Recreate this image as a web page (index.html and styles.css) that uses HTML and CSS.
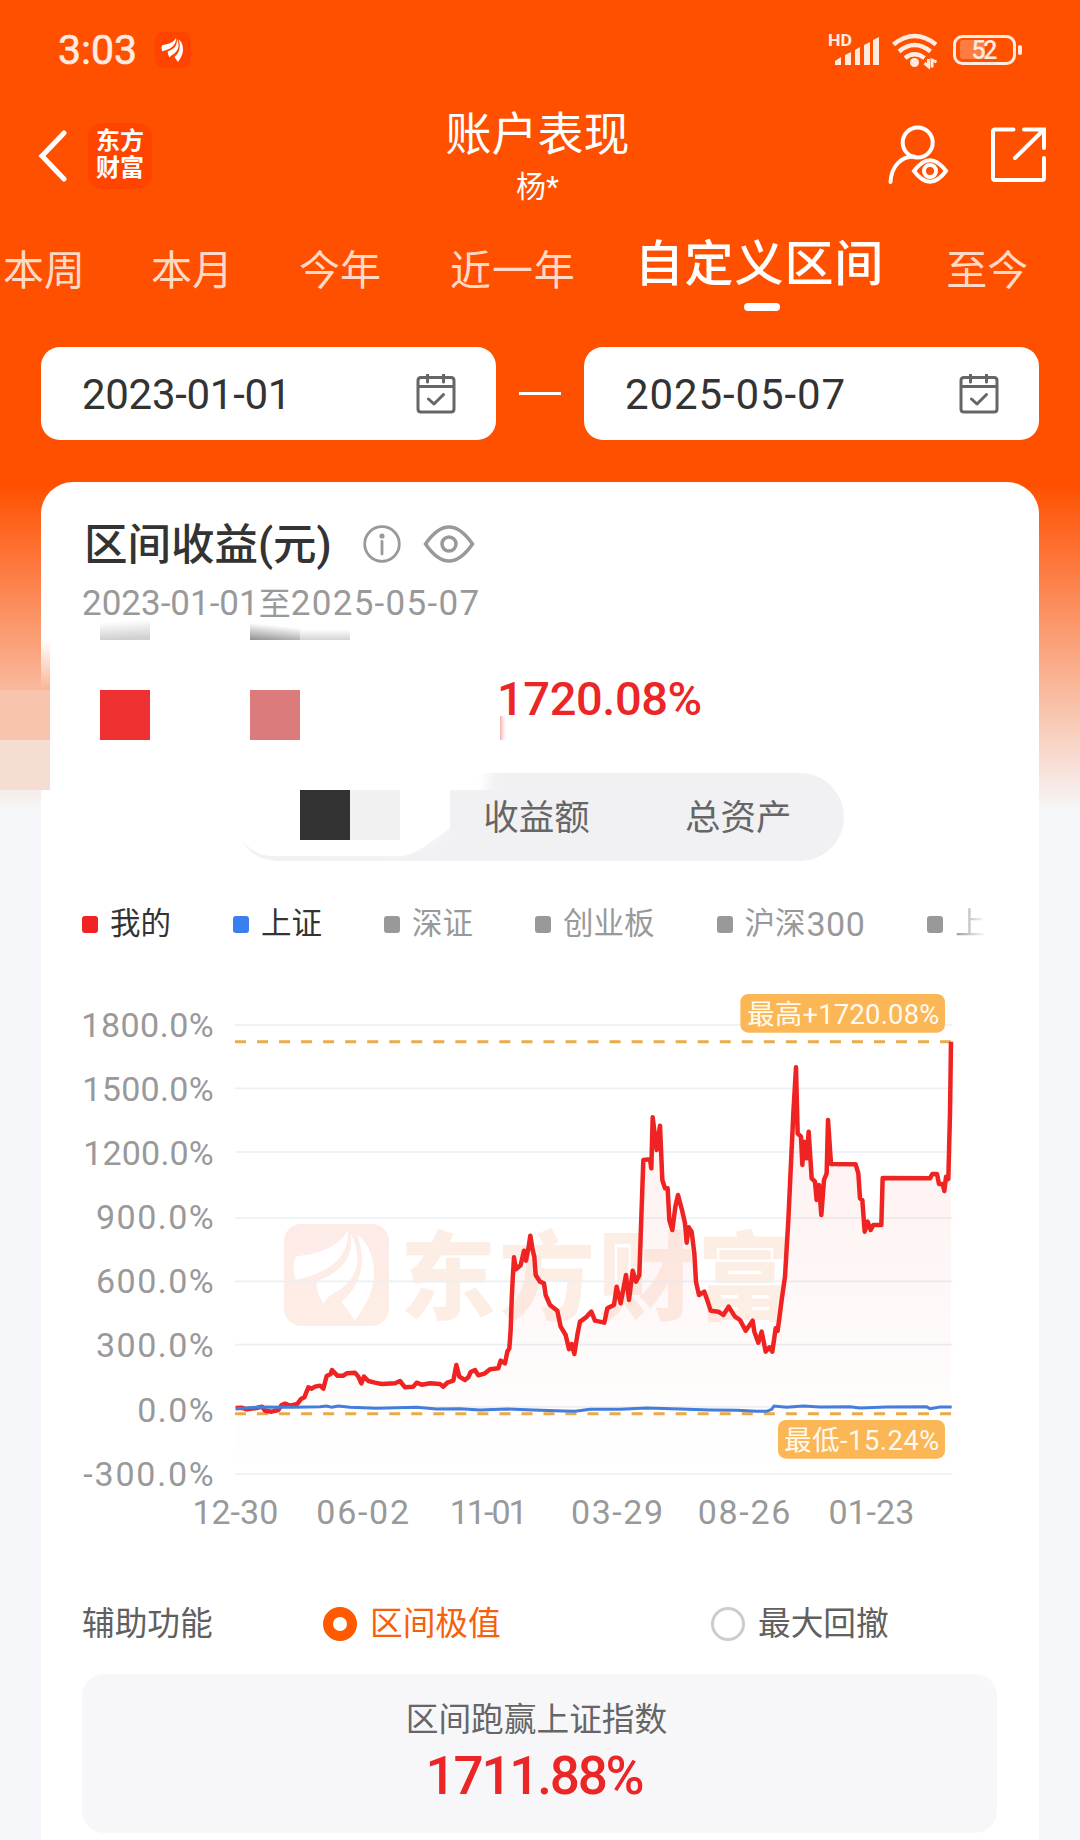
FILE: index.html
```html
<!DOCTYPE html>
<html lang="zh-CN">
  <head>
    <meta charset="utf-8" />
    <title>账户表现</title>
    <link rel="stylesheet" href="styles.css">
  </head>
  <body>
    <svg class="defs">
      <symbol id="leaf" viewBox="0 0 315 308">
        <path d="M190 22C155 80 80 93 38 97Q20 120 36 167C120 150 195 110 192 22Z" />
        <path d="M200 26C212 110 165 145 98 172Q95 200 118 239Q128 218 165 198C225 160 235 95 200 26Z" />
        <path d="M219 32C255 55 275 110 269 165C264 220 235 255 213 290Q195 262 173 234C190 215 218 195 229 145Q242 95 219 32Z" />
      </symbol>
      <symbol id="calendar" viewBox="0 0 40 40">
        <path d="M5 3.5H35Q38 3.5 38 6.500V35Q38 38 35 38H5Q2 38 2 35V6.500Q2 3.500 5 3.500ZM2 12.500H38M11.500 0V8M27.500 0V8M12.500 25L18 30L27.500 20.500" />
      </symbol>
    </svg>

    <div class="page">
      <div class="status-bar">
        <span class="time">3:03</span>
        <span class="mini-logo"><svg viewBox="0 0 315 308"><use href="#leaf" /></svg></span>
        <svg class="signals" width="200" height="40" viewBox="825 30 200 40">
          <text class="hd" x="828" y="46" textLength="24" lengthAdjust="spacingAndGlyphs">HD</text>
          <path class="solid" d="M835 65V61L841 57V65ZM845 65V55L851 52V65ZM855 65V50L860 47V65ZM864 65V45L870 42V65ZM873 65V40L879 37V65Z" />
          <path class="wave" d="M893.500 44.500Q914.500 27.500 936 44.500M899 51.500Q914.500 38.500 930.500 51.500M905 58Q914.500 50.500 924.500 58" />
          <circle class="solid" cx="914.500" cy="62.500" r="4.500" />
          <path class="updown" d="M924.500 63L928.500 66.500V59M936.500 62L932 60V67.500" />
          <rect class="battery" x="954.500" y="36.500" width="60" height="27" rx="8" />
          <rect class="charge" x="960" y="40" width="25" height="19" rx="3" />
          <rect class="solid" x="1018" y="45" width="4" height="10" rx="2" />
          <text class="level" x="971.500" y="59" textLength="26">52</text>
        </svg>
      </div>

      <div class="nav">
        <div class="nav-left">
          <svg width="32" height="52" viewBox="0 0 32 52"><path class="chevron" d="M27 3L5 26L27 49" /></svg>
          <div class="brand">东方<br>财富</div>
        </div>
        <div class="nav-title">
          <h1>账户表现</h1>
          <span>杨*</span>
        </div>
        <div class="nav-right">
          <svg class="line-icon" width="62" height="60" viewBox="887 125 62 60">
            <circle cx="917.700" cy="142.500" r="15" />
            <path d="M890.500 182C891.500 166 901 156.500 914 156.500M914 171Q930 149.500 946 171Q930 192.500 914 171Z" />
            <circle cx="930" cy="171" r="6" />
          </svg>
          <svg class="line-icon" width="58" height="58" viewBox="990 126 58 58">
            <path d="M1013.500 129.500H995Q993 129.500 993 131.500V178Q993 180 995 180H1042Q1044 180 1044 178V158M1024 129.500H1044V148M1043 130.500L1015 158" />
          </svg>
        </div>
      </div>

      <div class="tabs">
        <span>本周</span>
        <span>本月</span>
        <span>今年</span>
        <span class="tab-year">近一年</span>
        <span class="active">自定义区间</span>
        <span>至今</span>
      </div>

      <div class="dates">
        <div class="date-box">
          <span class="d1">2023-01-01</span>
          <svg class="calendar" width="40" height="40"><use href="#calendar" /></svg>
        </div>
        <i class="dash"></i>
        <div class="date-box">
          <span class="d2">2025-05-07</span>
          <svg class="calendar" width="40" height="40"><use href="#calendar" /></svg>
        </div>
      </div>

      <div class="card">
        <div class="card-title">
          <h2>区间收益(元)</h2>
          <svg class="grey-icon" width="40" height="40" viewBox="0 0 40 40">
            <circle cx="20" cy="20" r="17.300" />
            <path d="M20 17.500V30" /><circle class="dot" cx="20" cy="12" r="1.200" />
          </svg>
          <svg class="grey-icon eye" width="52" height="40" viewBox="0 0 52 40">
            <path d="M2.500 20Q26 -14 49.500 20Q26 54 2.500 20Z" />
            <circle cx="26" cy="20" r="7" />
          </svg>
        </div>
        <div class="range"><span class="from">2023-01-01</span>至<span>2025-05-07</span></div>
        <div class="rate">1720.08%</div>

        <div class="switch">
          <span class="chosen"></span>
          <span>收益额</span>
          <span>总资产</span>
        </div>

        <div class="legend">
          <span class="item mine"><i></i>我的</span>
          <span class="item sh"><i></i>上证</span>
          <span class="item"><i></i>深证</span>
          <span class="item"><i></i>创业板</span>
          <span class="item"><i></i>沪深<b>300</b></span>
          <span class="item"><i></i><em>上</em></span>
        </div>

        <!-- three units per pixel -->
        <svg class="chart" width="900" height="560" viewBox="0 0 2700 1680">
          <defs>
            <linearGradient id="fade" gradientUnits="userSpaceOnUse" x1="0" y1="185" x2="0" y2="1482">
              <stop offset="0" stop-color="#f02020" stop-opacity=".08" />
              <stop offset="0.6" stop-color="#f02020" stop-opacity=".032" />
              <stop offset="1" stop-color="#f02020" stop-opacity="0" />
            </linearGradient>
            <linearGradient id="mark" x1="0" y1="0" x2="0" y2="1">
              <stop offset="0" stop-color="#fdebe8" />
              <stop offset="1" stop-color="#fdeee5" />
            </linearGradient>
          </defs>

          <rect x="672" y="732" width="315" height="306" rx="52" fill="url(#mark)" />
          <use class="leaf" href="#leaf" x="672" y="732" width="315" height="308" />
          <text class="watermark" x="1020" y="996" textLength="1180">东方财富</text>

          <path class="grid" d="M525 135H2678M525 325H2678M525 516H2678M525 714H2678M525 904H2678M525 1094H2678M525 1281H2678M525 1482H2678" />

          <g class="y-axis">
            <text x="64" y="171" textLength="397">1800.0%</text>
            <text x="67" y="363" textLength="394">1500.0%</text>
            <text x="70" y="555" textLength="391">1200.0%</text>
            <text x="108" y="748" textLength="353">900.0%</text>
            <text x="108" y="940" textLength="353">600.0%</text>
            <text x="108" y="1132" textLength="353">300.0%</text>
            <text x="232" y="1325" textLength="229">0.0%</text>
            <text x="70" y="1517" textLength="391">-300.0%</text>
          </g>
          <g class="x-axis">
            <text x="526" y="1631">12-30</text>
            <text x="908" y="1631" textLength="278">06-02</text>
            <text x="1286" y="1631" textLength="234">11-01</text>
            <text x="1671" y="1631" textLength="276">03-29</text>
            <text x="2052" y="1631" textLength="278">08-26</text>
            <text x="2434" y="1631">01-23</text>
          </g>

          <path class="limit" d="M525 185H2675M525 1301H2675" />
          <path id="area" fill="url(#fade)" />
          <polyline id="mine" class="mine-line" points="527,1284 545,1283 560,1288 590,1284 606,1280 615,1292 635,1295 655,1290 665,1275 675,1271 690,1277 712,1272 722,1258 733,1252 745,1222 755,1226 765,1220 780,1217 790,1226 800,1188 812,1182 816,1170 832,1187 850,1187 860,1180 885,1178 895,1190 904,1210 912,1190 925,1203 945,1208 965,1212 1005,1210 1020,1203 1035,1222 1060,1220 1070,1208 1085,1214 1110,1210 1140,1212 1150,1220 1162,1208 1180,1202 1189,1155 1198,1190 1215,1200 1225,1192 1232,1176 1245,1170 1255,1186 1275,1180 1290,1168 1315,1165 1322,1142 1335,1150 1342,1115 1348,1105 1352,1050 1355,960 1358,900 1362,832 1368,868 1382,855 1392,812 1398,842 1406,800 1411,767 1418,810 1423,830 1427,885 1440,905 1452,910 1457,945 1470,975 1492,992 1502,1040 1517,1065 1527,1108 1535,1092 1543,1122 1552,1065 1560,1025 1578,1012 1594,995 1605,1022 1633,1028 1642,985 1662,975 1670,920 1682,970 1698,885 1707,960 1718,872 1728,905 1738,885 1750,540 1770,538 1774,565 1778,412 1790,510 1800,437 1807,600 1815,625 1823,625 1828,720 1837,750 1846,680 1854,645 1866,690 1875,730 1880,788 1886,742 1895,755 1903,820 1908,905 1917,945 1933,935 1945,970 1952,992 1975,995 1990,1005 2006,980 2025,1010 2040,1020 2057,1052 2078,1022 2083,1055 2095,1088 2105,1055 2117,1115 2128,1102 2137,1115 2147,1045 2153,1052 2165,960 2175,890 2185,720 2200,400 2208,262 2213,460 2223,470 2227,555 2232,485 2240,535 2246,455 2255,595 2265,605 2270,660 2277,615 2284,705 2292,600 2300,580 2304,420 2313,552 2387,553 2395,580 2400,655 2407,660 2414,755 2423,725 2432,750 2440,735 2464,735 2468,594 2610,595 2617,582 2631,582 2637,612 2648,612 2653,633 2658,590 2665,597 2670,400 2673,185" />
          <polyline class="sh-line" points="527,1286 600,1281 700,1282 780,1280 800,1278 815,1282 835,1278 870,1282 950,1285 1070,1282 1130,1287 1200,1286 1260,1290 1340,1287 1420,1290 1510,1293 1545,1294 1590,1288 1680,1288 1760,1284 1860,1287 1950,1290 2030,1291 2090,1294 2120,1294 2135,1288 2142,1278 2180,1282 2230,1278 2280,1281 2370,1280 2400,1284 2480,1281 2600,1280 2610,1286 2640,1281 2675,1281" />

          <rect class="tag" x="2041" y="42" width="614" height="116" rx="24" />
          <text class="tag-text" x="2062" y="131" textLength="576">最高+1720.08%</text>
          <rect class="tag" x="2154" y="1320" width="501" height="116" rx="24" />
          <text class="tag-text" x="2173" y="1409" textLength="465">最低-15.24%</text>
        </svg>

        <div class="options">
          <span class="label">辅助功能</span>
          <span class="option on"><i></i>区间极值</span>
          <span class="option"><i></i>最大回撤</span>
        </div>

        <div class="summary">
          <span>区间跑赢上证指数</span>
          <strong>1711.88%</strong>
        </div>
      </div>

      <!-- blurred-out account figures -->
      <svg class="mosaic" width="520" height="280" viewBox="0 600 520 280">
        <defs>
          <filter id="soft" x="-20%" y="-20%" width="140%" height="140%"><feGaussianBlur stdDeviation="6" /></filter>
          <linearGradient id="g1" x1="0" y1="0" x2="0.15" y2="1"><stop offset="0.1" stop-color="#fff" /><stop offset="1" stop-color="#d0d0d0" /></linearGradient>
          <linearGradient id="g2" x1="0.25" y1="0.1" x2="0" y2="1"><stop offset="0.1" stop-color="#fff" /><stop offset="1" stop-color="#909090" /></linearGradient>
          <linearGradient id="g3" x1="0" y1="0" x2="0" y2="1"><stop offset="0.1" stop-color="#fff" /><stop offset="1" stop-color="#d4d4d4" /></linearGradient>
          <linearGradient id="g4" x1="0" y1="0" x2="0" y2="1"><stop offset="0" stop-color="#fcb394" stop-opacity="0" /><stop offset="1" stop-color="#fcb394" /></linearGradient>
          <linearGradient id="g5" x1="0" y1="0" x2="1" y2="0"><stop offset="0" stop-color="#f5b0b0" /><stop offset="1" stop-color="#fff" stop-opacity="0" /></linearGradient>
        </defs>
        <path class="white" filter="url(#soft)" d="M220 760H488V790L462 815L440 832L425 842L400 852L260 846L225 842Z" />
        <path class="white" d="M230 790H450V828L425 846Q412 856 398 856H272Q256 856 244 842L230 840Z" />
        <rect x="41" y="640" width="9" height="50" fill="url(#g4)" />
        <rect x="100" y="620" width="50" height="20" fill="url(#g1)" />
        <rect x="250" y="620" width="50" height="20" fill="url(#g2)" />
        <rect x="300" y="628" width="50" height="12" fill="url(#g3)" />
        <rect x="0" y="690" width="50" height="50" fill="#f9c4ad" />
        <rect x="0" y="740" width="50" height="50" fill="#f6ddd1" />
        <rect x="100" y="690" width="50" height="50" fill="#ee3033" />
        <rect x="250" y="690" width="50" height="50" fill="#db7b7c" />
        <rect x="500" y="716" width="8" height="24" fill="url(#g5)" />
        <rect x="300" y="790" width="50" height="50" fill="#323232" />
        <rect x="350" y="790" width="50" height="50" fill="#f1f1f1" />
        <rect x="450" y="790" width="50" height="50" fill="#f1f1f4" />
      </svg>
    </div>

    <script>
      const line = document.getElementById("mine").getAttribute("points");
      document.getElementById("area").setAttribute("d", `M${line} L2673,1482 L527,1482 Z`);
    </script>
  </body>
</html>
```
FILE: styles.css
```css
* {
  box-sizing: border-box;
}
body {
  margin: 0;
  background-color: #f6f7fa;
  font-family: Roboto, "Noto Sans CJK SC", sans-serif;
  color: #333;
}
.defs {
  display: none;
}
.page {
  position: relative;
  width: 1080px;
  height: 1840px;
  overflow: hidden;
  background: linear-gradient(#ff5000 485px, #f6f7fa 812px);
}
h1,
h2 {
  margin: 0;
}

/* status bar */
.status-bar {
  display: flex;
  align-items: center;
  height: 100px;
  padding: 0 55px 0 58px;
}
.time {
  width: 97px;
  font-size: 41px;
  color: #ffebe0;
  -webkit-text-stroke: 0.6px #ffebe0;
}
.mini-logo {
  display: flex;
  justify-content: center;
  align-items: center;
  width: 36px;
  height: 36px;
  border-radius: 8px;
  background-color: #ff4400;
}
.mini-logo svg {
  width: 28px;
  height: 28px;
  fill: white;
}
.signals {
  margin-left: auto;
}
.signals text,
.solid {
  fill: #ffebe0;
}
.hd {
  font-size: 17px;
  font-weight: 700;
}
.level {
  font-size: 25px;
  font-weight: 500;
}
.wave,
.updown,
.battery {
  fill: none;
  stroke: #ffebe0;
  stroke-width: 4.5;
}
.updown,
.battery {
  stroke-width: 3;
}
.charge {
  fill: rgba(255, 255, 255, 0.25);
}

/* navigation */
.nav {
  display: grid;
  grid-template-columns: 1fr auto 1fr;
  height: 110px;
  padding: 0 32px 0 37px;
  color: white;
}
.nav-left {
  display: flex;
  align-items: center;
  gap: 19px;
  padding-bottom: 4px;
}
.chevron {
  fill: none;
  stroke: white;
  stroke-width: 5;
  stroke-linecap: round;
}
.brand {
  width: 64px;
  height: 66px;
  padding-top: 5px;
  border-radius: 14px;
  background-color: #ff4400;
  text-align: center;
  font-size: 24px;
  font-weight: 700;
  line-height: 27px;
}
.nav-title {
  display: flex;
  flex-direction: column;
  align-items: center;
  margin: 0 5px 0 -5px;
}
.nav-title h1 {
  padding-top: 9px;
  font-size: 46px;
  font-weight: 400;
  line-height: 50px;
}
.nav-title span {
  font-size: 30px;
  line-height: 56px;
}
.nav-right {
  display: flex;
  justify-content: flex-end;
  align-items: center;
  gap: 41px;
  padding-bottom: 5px;
}
.line-icon {
  fill: none;
  stroke: white;
  stroke-width: 4;
  stroke-linecap: round;
}

/* period tabs */
.tabs {
  display: flex;
  gap: 66px;
  height: 137px;
  padding-left: 3px;
  white-space: nowrap;
  font-size: 41px;
  line-height: 122px;
  color: #ffd9c6;
}
.tab-year {
  margin-left: 3px;
  letter-spacing: 0.9px;
}
.active {
  display: flex;
  flex-direction: column;
  align-items: center;
  margin: 0 -4px 0 -7px;
  font-size: 49px;
  font-weight: 500;
  line-height: 110px;
  letter-spacing: 0.9px;
  color: white;
}
.active::after {
  content: "";
  width: 36px;
  height: 8px;
  margin-top: -17px;
  margin-left: 6px;
  border-radius: 4px;
  background-color: white;
}

/* date pickers */
.dates {
  display: flex;
  align-items: center;
  justify-content: space-between;
  padding: 0 41px;
}
.date-box {
  display: flex;
  align-items: center;
  justify-content: space-between;
  width: 455px;
  height: 93px;
  padding: 0 40px 0 41px;
  border-radius: 19px;
  background-color: white;
  font-size: 42px;
}
.date-box span {
  padding-top: 2px;
}
.d1 {
  letter-spacing: -0.3px;
}
.d2 {
  letter-spacing: 0.9px;
}
.calendar {
  fill: none;
  stroke: #666;
  stroke-width: 3;
  stroke-linecap: round;
  stroke-linejoin: round;
}
.dash {
  width: 42px;
  height: 3px;
  background-color: white;
}

/* main card */
.card {
  width: 998px;
  height: 1400px;
  margin: 42px auto 0;
  padding: 36px 42px 0 41px;
  border-radius: 32px;
  background-color: white;
}
.card-title {
  display: flex;
  align-items: center;
  height: 52px;
}
.card-title h2 {
  width: 280px;
  padding: 0 0 6px 2px;
  font-size: 43.5px;
  font-weight: 500;
}
.grey-icon {
  fill: none;
  stroke: #999;
  stroke-width: 2.8;
  stroke-linecap: round;
}
.eye {
  margin-left: 21px;
  stroke-width: 3.5;
}
.range {
  height: 62px;
  font-size: 32px;
  line-height: 68px;
  color: #999;
}
.range span {
  font-size: 35px;
  letter-spacing: 1.3px;
}
.range .from {
  letter-spacing: 0;
}
.rate {
  height: 141px;
  padding-left: 415px;
  font-size: 47px;
  font-weight: 500;
  line-height: 134px;
  letter-spacing: -0.4px;
  color: #ea2627;
}
.switch {
  display: flex;
  width: 610px;
  height: 88px;
  margin-left: 152px;
  padding-right: 5px;
  border-radius: 44px;
  background-color: #f1f1f4;
  font-size: 35.5px;
  line-height: 90px;
  color: #666;
}
.switch span {
  position: relative;
  z-index: 2;
  flex: 1;
  text-align: center;
}
.switch .chosen {
  z-index: 0;
}

/* index legend */
.legend {
  display: flex;
  gap: 62px;
  height: 60px;
  margin-top: 33px;
  white-space: nowrap;
  font-size: 30.5px;
  line-height: 60px;
  color: #999;
}
.item {
  display: flex;
  align-items: center;
  gap: 12px;
}
.item i {
  width: 16px;
  height: 17px;
  border-radius: 3px;
  background-color: #999;
}
.item b {
  margin-left: -11px;
  font-size: 34px;
  font-weight: 400;
  letter-spacing: 0.5px;
}
.item em {
  font-style: normal;
  -webkit-mask-image: linear-gradient(to right, #000, rgba(0, 0, 0, 0.1) 28px);
  mask-image: linear-gradient(to right, #000, rgba(0, 0, 0, 0.1) 28px);
}
.mine,
.sh {
  color: #333;
}
.mine i {
  background-color: #f32222;
}
.sh i {
  background-color: #3a7ff0;
}

/* chart */
.chart {
  display: block;
  margin: 26px 0 0 -22px;
}
.leaf {
  fill: white;
}
.watermark {
  font-size: 288px;
  font-weight: 900;
  fill: #fdeee5;
}
.grid {
  stroke: #eceff4;
  stroke-width: 5;
}
.y-axis,
.x-axis {
  font-size: 102px;
  fill: #999;
}
.x-axis {
  text-anchor: middle;
}
.limit {
  stroke: #e9ac4b;
  stroke-width: 9;
  stroke-dasharray: 33 33.1;
}
.mine-line {
  fill: none;
  stroke: #f02323;
  stroke-width: 13.5;
  stroke-linejoin: round;
}
.sh-line {
  fill: none;
  stroke: #437edc;
  stroke-width: 9;
}
.tag {
  fill: #fbb755;
}
.tag-text {
  font-size: 82px;
  fill: #fffaf0;
}

/* helper options */
.options {
  display: flex;
  align-items: center;
  height: 60px;
  margin-top: 54px;
  white-space: nowrap;
  font-size: 32.7px;
  line-height: 60px;
  color: #606060;
}
.label {
  flex: none;
  width: 241px;
}
.option {
  display: flex;
  flex: none;
  align-items: center;
  gap: 13px;
  width: 388px;
}
.option + .option {
  width: 280px;
}
.option i {
  width: 34px;
  height: 34px;
  border: 3px solid #ccc;
  border-radius: 50%;
}
.option.on i {
  border: 10px solid #ff5a00;
}
.on {
  color: #f7600a;
}
.summary {
  display: flex;
  flex-direction: column;
  align-items: center;
  height: 159px;
  margin-top: 20px;
  padding: 19px 6px 0 0;
  border-radius: 22px;
  background-color: #f7f7fa;
  font-size: 32.7px;
  line-height: 54px;
  color: #666;
}
.summary strong {
  margin-right: 5px;
  font-size: 53px;
  font-weight: 500;
  line-height: 59px;
  letter-spacing: -2.2px;
  color: #ea2627;
}

.mosaic {
  position: absolute;
  top: 600px;
  left: 0;
  z-index: 1;
}
.white {
  fill: white;
}
```
